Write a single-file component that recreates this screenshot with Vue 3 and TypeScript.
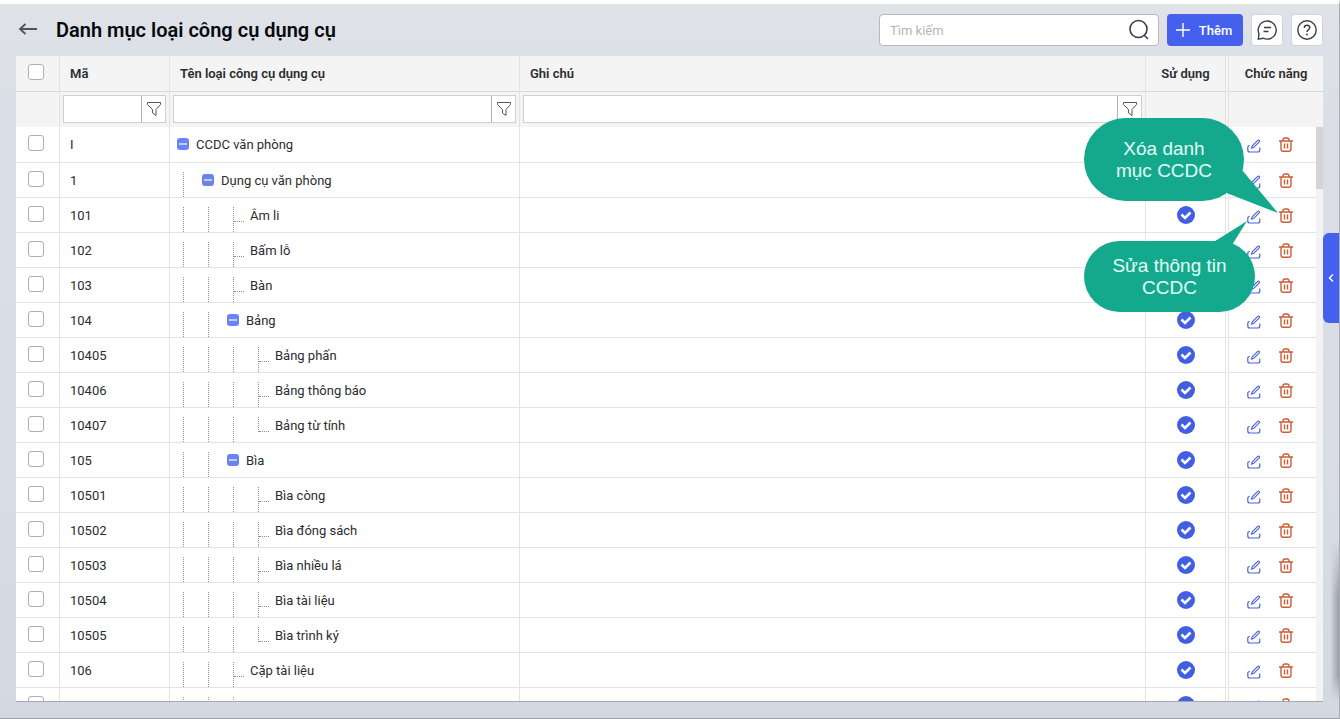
<script setup lang="ts">
import { ref } from 'vue'

interface Item {
  code: string
  name: string
  level: number
  parent?: boolean
  last?: boolean
}

const items: Item[] = [
  { code: 'I', name: 'CCDC văn phòng', level: 0, parent: true },
  { code: '1', name: 'Dụng cụ văn phòng', level: 1, parent: true },
  { code: '101', name: 'Âm li', level: 3 },
  { code: '102', name: 'Bấm lỗ', level: 3 },
  { code: '103', name: 'Bàn', level: 3 },
  { code: '104', name: 'Bảng', level: 2, parent: true },
  { code: '10405', name: 'Bảng phấn', level: 4 },
  { code: '10406', name: 'Bảng thông báo', level: 4 },
  { code: '10407', name: 'Bảng từ tính', level: 4, last: true },
  { code: '105', name: 'Bìa', level: 2, parent: true },
  { code: '10501', name: 'Bìa còng', level: 4 },
  { code: '10502', name: 'Bìa đóng sách', level: 4 },
  { code: '10503', name: 'Bìa nhiều lá', level: 4 },
  { code: '10504', name: 'Bìa tài liệu', level: 4 },
  { code: '10505', name: 'Bìa trình ký', level: 4, last: true },
  { code: '106', name: 'Cặp tài liệu', level: 3 },
  { code: '', name: '', level: 3 },
]

const search = ref('')
const filterLabels = ['Lọc theo mã', 'Lọc theo tên', 'Lọc theo ghi chú']
const filters = ref(['', '', ''])
</script>

<template>
  <div class="page">
    <header class="bar">
      <button class="back" aria-label="Quay lại">
        <svg width="20" height="16" viewBox="0 0 20 16"><path d="M19 7H2M7.500 2L2 7l5.500 5" /></svg>
      </button>
      <h1>Danh mục loại công cụ dụng cụ</h1>
      <div class="search">
        <input v-model="search" type="text" placeholder="Tìm kiếm" aria-label="Tìm kiếm" />
        <svg width="22" height="22" viewBox="0 0 22 22"><circle cx="10.500" cy="10" r="8.500" /><path d="M16.500 16.500L20 20" /></svg>
      </div>
      <button class="add">
        <svg width="14" height="14" viewBox="0 0 14 14"><path d="M7 0v14M0 7h14" /></svg>
        <span>Thêm</span>
      </button>
      <button class="tool" aria-label="Phản hồi">
        <svg width="22" height="22" viewBox="0 0 22 22">
          <path d="M2.300 20.200L3 14.800A9 9 0 1 1 7.300 19.200ZM8 8.500h7M7.500 12.500h5" />
        </svg>
      </button>
      <button class="tool" aria-label="Trợ giúp">
        <svg width="22" height="22" viewBox="0 0 22 22">
          <circle cx="11" cy="11" r="9.200" />
          <path d="M8.300 9C8.300 7.300 9.500 6.300 11 6.300s2.700 1 2.700 2.400c0 1.900-2.700 2-2.700 4.300" />
          <circle class="dot" cx="11" cy="15.600" r="1" />
        </svg>
      </button>
    </header>

    <main class="panel">
      <table>
        <colgroup>
          <col class="c-check" /><col class="c-code" /><col class="c-name" /><col /><col class="c-use" /><col class="c-act" />
        </colgroup>
        <thead>
          <tr class="heads">
            <th class="check"><input type="checkbox" aria-label="Chọn tất cả" /></th>
            <th>Mã</th>
            <th>Tên loại công cụ dụng cụ</th>
            <th>Ghi chú</th>
            <th class="use">Sử dụng</th>
            <th class="mid">Chức năng</th>
          </tr>
          <tr class="filters">
            <td></td>
            <td v-for="(label, i) in filterLabels" :key="label">
              <div class="filter">
                <input v-model="filters[i]" type="text" :aria-label="label" />
                <button :aria-label="label + ': điều kiện'">
                  <svg width="16" height="16" viewBox="0 0 16 16"><path d="M1.500 1.500h13v2L10 8.500v6L6.500 12V8.500L1.500 3.500Z" /></svg>
                </button>
              </div>
            </td>
            <td class="use"></td>
            <td></td>
          </tr>
        </thead>
        <tbody>
          <tr v-for="(item, r) in items" :key="r">
            <td class="check"><input type="checkbox" :aria-label="'Chọn ' + item.code" /></td>
            <td class="code">{{ item.code }}</td>
            <td class="name">
              <div class="tree">
                <span
                  v-for="n in item.level"
                  :key="n"
                  class="guide"
                  :class="{ elbow: !item.parent && n === item.level && item.name, end: item.last && n === item.level }"
                ></span>
                <button v-if="item.parent" class="toggle" :aria-label="'Thu gọn ' + item.name">
                  <svg width="12" height="12" viewBox="0 0 12 12"><path d="M2 6h8" /></svg>
                </button>
                <span class="label" :class="{ leaf: !item.parent }">{{ item.name }}</span>
              </div>
            </td>
            <td></td>
            <td class="use">
              <svg class="tick" width="18" height="18" viewBox="0 0 18 18"><circle cx="9" cy="9" r="9" /><path d="M4.500 8.500l3.500 3.500 5.500-5.500" /></svg>
            </td>
            <td>
              <div class="actions">
                <button class="edit" aria-label="Sửa">
                  <svg width="14" height="14" viewBox="0 0 14 14">
                    <path d="M2.800 6.500Q.8 6.500.8 8.500v2.500q0 2 2 2h8q2 0 2-2V8.500M4.600 9l.7-2.300 5.400-5.300q.8-.7 1.500 0t0 1.500L6.800 8.300Z" />
                  </svg>
                </button>
                <button class="remove" aria-label="Xóa">
                  <svg width="14" height="16" viewBox="0 0 14 16">
                    <path d="M0 4h14M2 4v8q0 2.200 2.200 2.200h5.600q2.200 0 2.200-2.200V4M4 4V3q0-2 2-2h2q2 0 2 2v1M5.500 6.500v5M8.500 6.500v5" />
                  </svg>
                </button>
              </div>
            </td>
          </tr>
        </tbody>
      </table>
      <div class="track"><div class="thumb"></div></div>
    </main>

    <div class="shade"></div>
    <button class="drawer" aria-label="Mở bảng bên">
      <svg width="6" height="10" viewBox="0 0 6 10"><path d="M5 1.500L1.500 5 5 8.500" /></svg>
    </button>

    <div class="callout delete-note">
      <svg width="60" height="50" viewBox="0 0 60 50"><path d="M18 2L54 45 0 24Z" /></svg>
      <p>Xóa danh<br />mục CCDC</p>
    </div>
    <div class="callout edit-note">
      <svg width="40" height="30" viewBox="0 0 40 30"><path d="M35 0L0 22V30H15L20 24Z" /></svg>
      <p>Sửa thông tin<br />CCDC</p>
    </div>
  </div>
</template>

<style>
html,
body {
  overflow: hidden;
}
</style>

<style scoped>
.page {
  position: relative;
  box-sizing: border-box;
  display: flex;
  flex-direction: column;
  height: 100vh;
  overflow: hidden;
  padding: 0 16px 16px;
  border-top: 4px solid #fff;
  border-right: 1px solid #a9abb0;
  border-bottom: 1px solid #a0a0a2;
  background: linear-gradient(180deg, #dfe2e7 0%, #d9dee7 20%, #d8dde6 60%, #d3d9e2 100%);
  font-family: Roboto, "Noto Sans", sans-serif;
  font-size: 13px;
  color: #2b2c30;
}
button {
  padding: 0;
  border: 0;
  background: none;
  font: inherit;
  cursor: pointer;
}
svg {
  display: block;
  fill: none;
  stroke: currentColor;
}
input {
  font: inherit;
}
.bar {
  display: flex;
  align-items: center;
  gap: 8px;
  height: 52px;
}
.back {
  width: 24px;
  display: flex;
  justify-content: center;
  color: #50535d;
}
.back svg {
  stroke-width: 1.8;
}
h1 {
  flex: 1;
  margin: 0 0 0 8px;
  font-size: 20px;
  line-height: 24px;
  font-weight: 600;
  color: #08090c;
}
.search {
  box-sizing: border-box;
  display: flex;
  align-items: center;
  width: 280px;
  height: 32px;
  padding: 0 8px 0 10px;
  border: 1px solid #b5b8be;
  border-radius: 4px;
  background: #fff;
  color: #3c3e44;
}
.search input {
  flex: 1;
  min-width: 0;
  padding: 0;
  border: 0;
  outline: 0;
  background: none;
}
.search input::placeholder {
  color: #b5b6ba;
}
.search svg {
  stroke-width: 1.6;
}
.add {
  display: flex;
  align-items: center;
  justify-content: center;
  gap: 9px;
  width: 76px;
  height: 32px;
  padding-right: 2px;
  border-radius: 4px;
  background: #4660ee;
  color: #fff;
  font-weight: 500;
}
.add svg {
  stroke-width: 1.4;
}
.tool {
  box-sizing: border-box;
  display: flex;
  align-items: center;
  justify-content: center;
  width: 32px;
  height: 32px;
  border: 1px solid #d2d5db;
  border-radius: 4px;
  background: #fff;
  color: #3c3e44;
}
.tool svg {
  flex: none;
  stroke-width: 1.4;
}
.tool .dot {
  fill: currentColor;
  stroke: none;
}
.panel {
  position: relative;
  flex: 1;
  min-height: 0;
  overflow: hidden;
  border-bottom: 1px solid #a4a8af;
  background: #fff;
}
table {
  width: 100%;
  table-layout: fixed;
  border-collapse: separate;
  border-spacing: 0;
}
.c-check { width: 44px; }
.c-code { width: 110px; }
.c-name { width: 350px; }
.c-use { width: 83px; }
.c-act { width: 94px; }
th,
td {
  box-sizing: border-box;
  height: 35px;
  padding: 0;
  border-right: 1px solid #e2e3e5;
  border-bottom: 1px solid #e2e3e5;
  vertical-align: top;
  text-align: left;
}
th:last-child,
td:last-child {
  border-right: 0;
}
.use {
  border-right: 4px double #e2e3e5;
  text-align: center;
}
thead {
  background: #f4f4f4;
}
th {
  height: 36px;
  padding: 0 10px;
  border-bottom-color: #d8d9db;
  line-height: 35px;
  font-weight: 600;
}
th.use,
th.mid {
  padding: 0;
  text-align: center;
}
.filters td {
  padding: 3px;
  border-bottom: 0;
}
.filter {
  box-sizing: border-box;
  display: flex;
  height: 28px;
  border: 1px solid #cfcfd0;
  background: #fff;
}
.filter input {
  flex: 1;
  min-width: 0;
  border: 0;
  outline: 0;
  padding: 0 8px;
}
.filter button {
  display: flex;
  align-items: center;
  justify-content: center;
  width: 24px;
  border-left: 1px solid #aeb0b2;
  color: #55575b;
}
tbody tr:first-child td {
  height: 36px;
}
th.check,
td.check {
  padding: 8px 0 0 12px;
  line-height: 0;
}
.check input {
  appearance: none;
  box-sizing: border-box;
  width: 16px;
  height: 16px;
  margin: 0;
  border: 1px solid #aeb0b4;
  border-radius: 3px;
  background: #fff;
}
.code {
  padding: 2px 0 0 10px;
  line-height: 32px;
}
.tree {
  display: flex;
  height: 34px;
}
.guide {
  position: relative;
  box-sizing: border-box;
  width: 12px;
  height: 25px;
  margin: 9px 0 0 13px;
  border-left: 1px dotted #8d8f93;
}
.guide.end {
  height: 15px;
}
.elbow::after {
  content: "";
  position: absolute;
  top: 14px;
  left: 0;
  width: 10px;
  border-top: 1px dotted #8d8f93;
}
.toggle {
  width: 12px;
  height: 12px;
  margin: 11px 7px 0 7px;
  border-radius: 3px;
  background: #6b83f0;
  color: #dfe5ff;
}
.toggle svg {
  stroke-width: 1.5;
}
.label {
  padding-top: 2px;
  line-height: 32px;
  white-space: nowrap;
}
.leaf {
  padding-left: 5px;
}
.tick {
  margin: 8px auto 0;
}
.tick circle {
  fill: #425fe4;
  stroke: none;
}
.tick path {
  stroke: #fff;
  stroke-width: 2.6;
}
.actions {
  display: flex;
  gap: 17px;
  padding: 10px 0 0 18px;
}
.edit {
  height: 14px;
  margin-top: 2px;
  color: #4c63dd;
}
.edit svg {
  stroke-width: 1.2;
}
.remove {
  height: 16px;
  margin-left: 1px;
  color: #cc5c36;
}
.remove svg {
  stroke-width: 1.4;
}
.track {
  position: absolute;
  top: 71px;
  right: 0;
  bottom: 0;
  width: 7px;
  background: #f3f3f4;
}
.thumb {
  height: 62px;
  background: #d4d4d5;
}
.shade {
  position: absolute;
  right: 0;
  bottom: 18px;
  width: 9px;
  height: 160px;
  background: linear-gradient(90deg, transparent, #9a9da6);
  mask-image: linear-gradient(180deg, transparent, #000 35%, #000 85%, transparent);
}
.drawer {
  position: absolute;
  top: 229px;
  right: 0;
  display: flex;
  align-items: center;
  justify-content: center;
  width: 16px;
  height: 90px;
  border-radius: 6px 0 0 6px;
  background: #4660ee;
  color: #fff;
}
.drawer svg {
  stroke-width: 1.5;
}
.callout {
  position: absolute;
  display: flex;
  align-items: center;
  justify-content: center;
  background: #14a98d;
  color: #e2fff8;
  font-family: "Liberation Sans", Arial, sans-serif;
  font-size: 19px;
  line-height: 22px;
  text-align: center;
}
.callout p {
  margin: 0;
}
.callout svg {
  position: absolute;
  fill: #14a98d;
  stroke: none;
}
.delete-note {
  top: 114px;
  right: 95px;
  width: 160px;
  height: 83px;
  border-radius: 42px;
}
.delete-note svg {
  top: 50px;
  left: 140px;
}
.edit-note {
  top: 237px;
  right: 84px;
  width: 171px;
  height: 71px;
  border-radius: 36px;
}
.edit-note svg {
  top: -20px;
  left: 128px;
}
</style>
